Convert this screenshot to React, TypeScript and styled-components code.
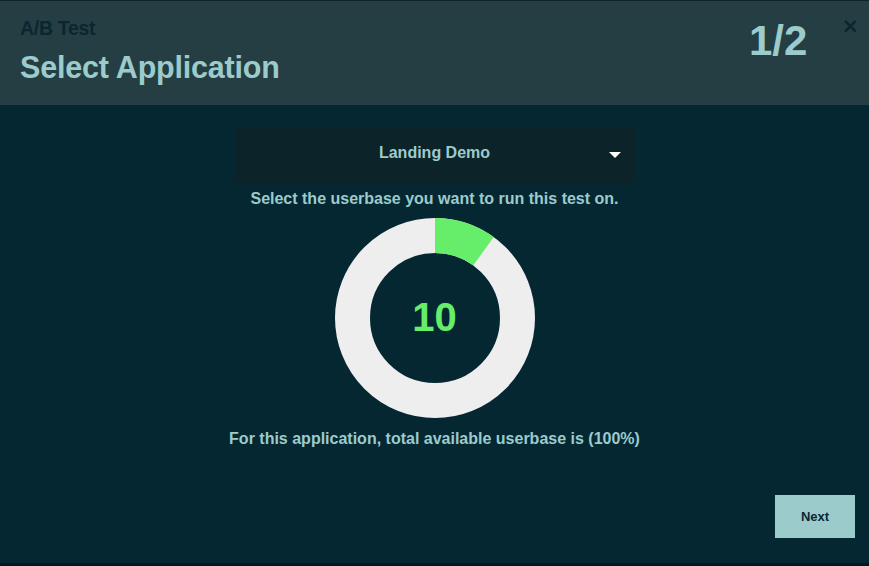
import React from "react";
import styled, { createGlobalStyle } from "styled-components";

const Global = createGlobalStyle`
  html, body { margin: 0; padding: 0; background: #052731; }
  body { font-family: "Liberation Sans", Arial, sans-serif; }
  * { box-sizing: border-box; }
`;

const Modal = styled.div`
  width: 869px;
  height: 566px;
  display: flex;
  flex-direction: column;
  background: #052731;
  border-top: 1px solid #0b2329;
  border-bottom: 3px solid #03181e;
`;

const Header = styled.header`
  height: 104px;
  background: #243e43;
  display: flex;
  justify-content: space-between;
  align-items: flex-start;
  padding: 0 10px 0 20px;
`;

const TitleBlock = styled.div`
  display: flex;
  flex-direction: column;
  padding-top: 16px;
`;

const Eyebrow = styled.div`
  font-size: 19.5px;
  font-weight: 700;
  color: #0a2630;
  line-height: 22px;
  letter-spacing: -0.3px;
`;

const Title = styled.h1`
  margin: 11px 0 0;
  font-size: 30.5px;
  font-weight: 700;
  color: #9ccbcc;
  line-height: 34px;
  letter-spacing: -0.2px;
`;

const HeaderRight = styled.div`
  display: flex;
  align-items: flex-start;
  gap: 34px;
`;

const Step = styled.div`
  margin-top: 17px;
  font-size: 42px;
  font-weight: 700;
  color: #9ccbcc;
  line-height: 46px;
`;

const Close = styled.button`
  margin-top: 13px;
  background: none;
  border: none;
  padding: 0;
  color: #0a2630;
  font-family: "DejaVu Sans", sans-serif;
  font-size: 21px;
  font-weight: 700;
  line-height: 24px;
  cursor: pointer;
`;

const Body = styled.main`
  flex: 1;
  display: flex;
  flex-direction: column;
  align-items: center;
  padding-top: 23px;
`;

const Select = styled.div`
  width: 400px;
  height: 55px;
  padding-bottom: 5px;
  background: #0c2329;
  display: flex;
  align-items: center;
  justify-content: center;
  position: relative;
  color: #9ccbcc;
  font-size: 16px;
  font-weight: 700;
`;

const Caret = styled.span`
  position: absolute;
  right: 14px;
  top: 24px;
  width: 0;
  height: 0;
  border-left: 6px solid transparent;
  border-right: 6px solid transparent;
  border-top: 6px solid #ffffff;
`;

const Hint = styled.p`
  margin: 7px 0 0;
  font-size: 16px;
  font-weight: 700;
  color: #9ccbcc;
  line-height: 18px;
`;

const Donut = styled.div`
  margin-top: 10px;
  width: 200px;
  height: 200px;
  position: relative;
  display: flex;
  align-items: center;
  justify-content: center;
`;

const DonutSvg = styled.svg`
  position: absolute;
  inset: 0;
`;

const DonutValue = styled.span`
  position: relative;
  top: -1px;
  font-size: 40px;
  font-weight: 700;
  color: #66ee6a;
`;

const Footnote = styled.p`
  margin: 12px 0 0;
  font-size: 16px;
  font-weight: 700;
  color: #9ccbcc;
  line-height: 18px;
`;

const Footer = styled.footer`
  display: flex;
  justify-content: flex-end;
  padding: 0 14px 25px 0;
`;

const NextButton = styled.button`
  width: 80px;
  height: 43px;
  border: none;
  background: #9ccbcc;
  color: #0b2a33;
  font-family: "Liberation Sans", Arial, sans-serif;
  font-size: 13px;
  font-weight: 700;
  cursor: pointer;
`;

function arcPath(cx: number, cy: number, rO: number, rI: number, frac: number) {
  const a = frac * 2 * Math.PI;
  const x1 = cx + rO * Math.sin(a);
  const y1 = cy - rO * Math.cos(a);
  const x2 = cx + rI * Math.sin(a);
  const y2 = cy - rI * Math.cos(a);
  const large = frac > 0.5 ? 1 : 0;
  return `M ${cx} ${cy - rO} A ${rO} ${rO} 0 ${large} 1 ${x1} ${y1} L ${x2} ${y2} A ${rI} ${rI} 0 ${large} 0 ${cx} ${cy - rI} Z`;
}

export default function App() {
  const value = 10;
  return (
    <>
      <Global />
      <Modal>
        <Header>
          <TitleBlock>
            <Eyebrow>A/B Test</Eyebrow>
            <Title>Select Application</Title>
          </TitleBlock>
          <HeaderRight>
            <Step>1/2</Step>
            <Close aria-label="close">×</Close>
          </HeaderRight>
        </Header>
        <Body>
          <Select>
            Landing Demo
            <Caret />
          </Select>
          <Hint>Select the userbase you want to run this test on.</Hint>
          <Donut>
            <DonutSvg width="200" height="200" viewBox="0 0 200 200">
              <circle cx="100" cy="100" r="82.5" fill="none" stroke="#eeeeee" strokeWidth="35" />
              <path d={arcPath(100, 100, 100, 65, value / 100)} fill="#66ee6a" />
            </DonutSvg>
            <DonutValue>{value}</DonutValue>
          </Donut>
          <Footnote>For this application, total available userbase is (100%)</Footnote>
        </Body>
        <Footer>
          <NextButton>Next</NextButton>
        </Footer>
      </Modal>
    </>
  );
}
